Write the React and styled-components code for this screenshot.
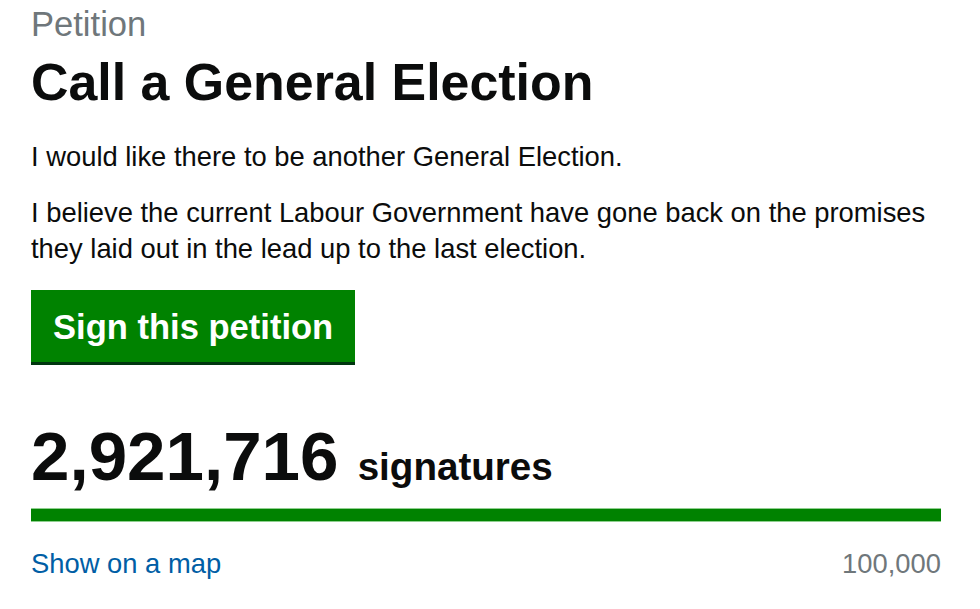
import React from "react";
import styled, { createGlobalStyle } from "styled-components";

const Global = createGlobalStyle`
  html, body { margin: 0; padding: 0; background: #ffffff; }
  body { font-family: "Liberation Sans", Arial, sans-serif; color: #0b0c0c; }
`;

const Page = styled.main`
  width: 910px;
  padding: 4px 0 0 31px;
  display: flex;
  flex-direction: column;
`;

const Caption = styled.span`
  font-size: 34.56px;
  line-height: 40px;
  color: #6f777b;
`;

const Title = styled.h1`
  margin: 9px 0 0;
  font-size: 51.9px;
  line-height: 58px;
  font-weight: 700;
`;

const Paragraph = styled.p`
  margin: ${(p) => p.$top}px 0 0;
  font-size: 27.36px;
  line-height: 36px;
`;

const SignButton = styled.a`
  align-self: flex-start;
  margin-top: 23px;
  padding: 17px 22px 15px 22px;
  background: #008200;
  color: #ffffff;
  font-size: 34.56px;
  line-height: 40px;
  font-weight: 700;
  text-decoration: none;
  box-shadow: 0 3px 0 #00360f;
`;

const Count = styled.p`
  margin: 60px 0 0;
  font-size: 69.12px;
  line-height: 69px;
  font-weight: 700;
`;

const CountLabel = styled.span`
  font-size: 38.6px;
`;

const Track = styled.div`
  margin-top: 7px;
  height: 14px;
  background: #e5e5e5;
`;

const Fill = styled.div`
  height: 100%;
  background: #008200;
  box-shadow: inset 0 1px 0 #8fcf8f, inset 0 -1px 0 #8fcf8f;
`;

const Footer = styled.div`
  margin-top: 24px;
  display: flex;
  justify-content: space-between;
  font-size: 27.36px;
  line-height: 36px;
`;

const MapLink = styled.a`
  color: #005ea5;
  text-decoration: none;
`;

const Target = styled.span`
  color: #6f777b;
`;

export default function App() {
  const signatures = 2921716;
  const target = 100000;
  const pct = Math.min(100, (signatures / target) * 100);
  return (
    <>
      <Global />
      <Page>
        <Caption>Petition</Caption>
        <Title>Call a General Election</Title>
        <Paragraph $top={28}>I would like there to be another General Election.</Paragraph>
        <Paragraph $top={20}>
          I believe the current Labour Government have gone back on the promises they laid out in the lead up to the last election.
        </Paragraph>
        <SignButton href="#">Sign this petition</SignButton>
        <Count>
          2,921,716 <CountLabel>signatures</CountLabel>
        </Count>
        <Track>
          <Fill style={{ width: `${pct}%` }} />
        </Track>
        <Footer>
          <MapLink href="#">Show on a map</MapLink>
          <Target>100,000</Target>
        </Footer>
      </Page>
    </>
  );
}
